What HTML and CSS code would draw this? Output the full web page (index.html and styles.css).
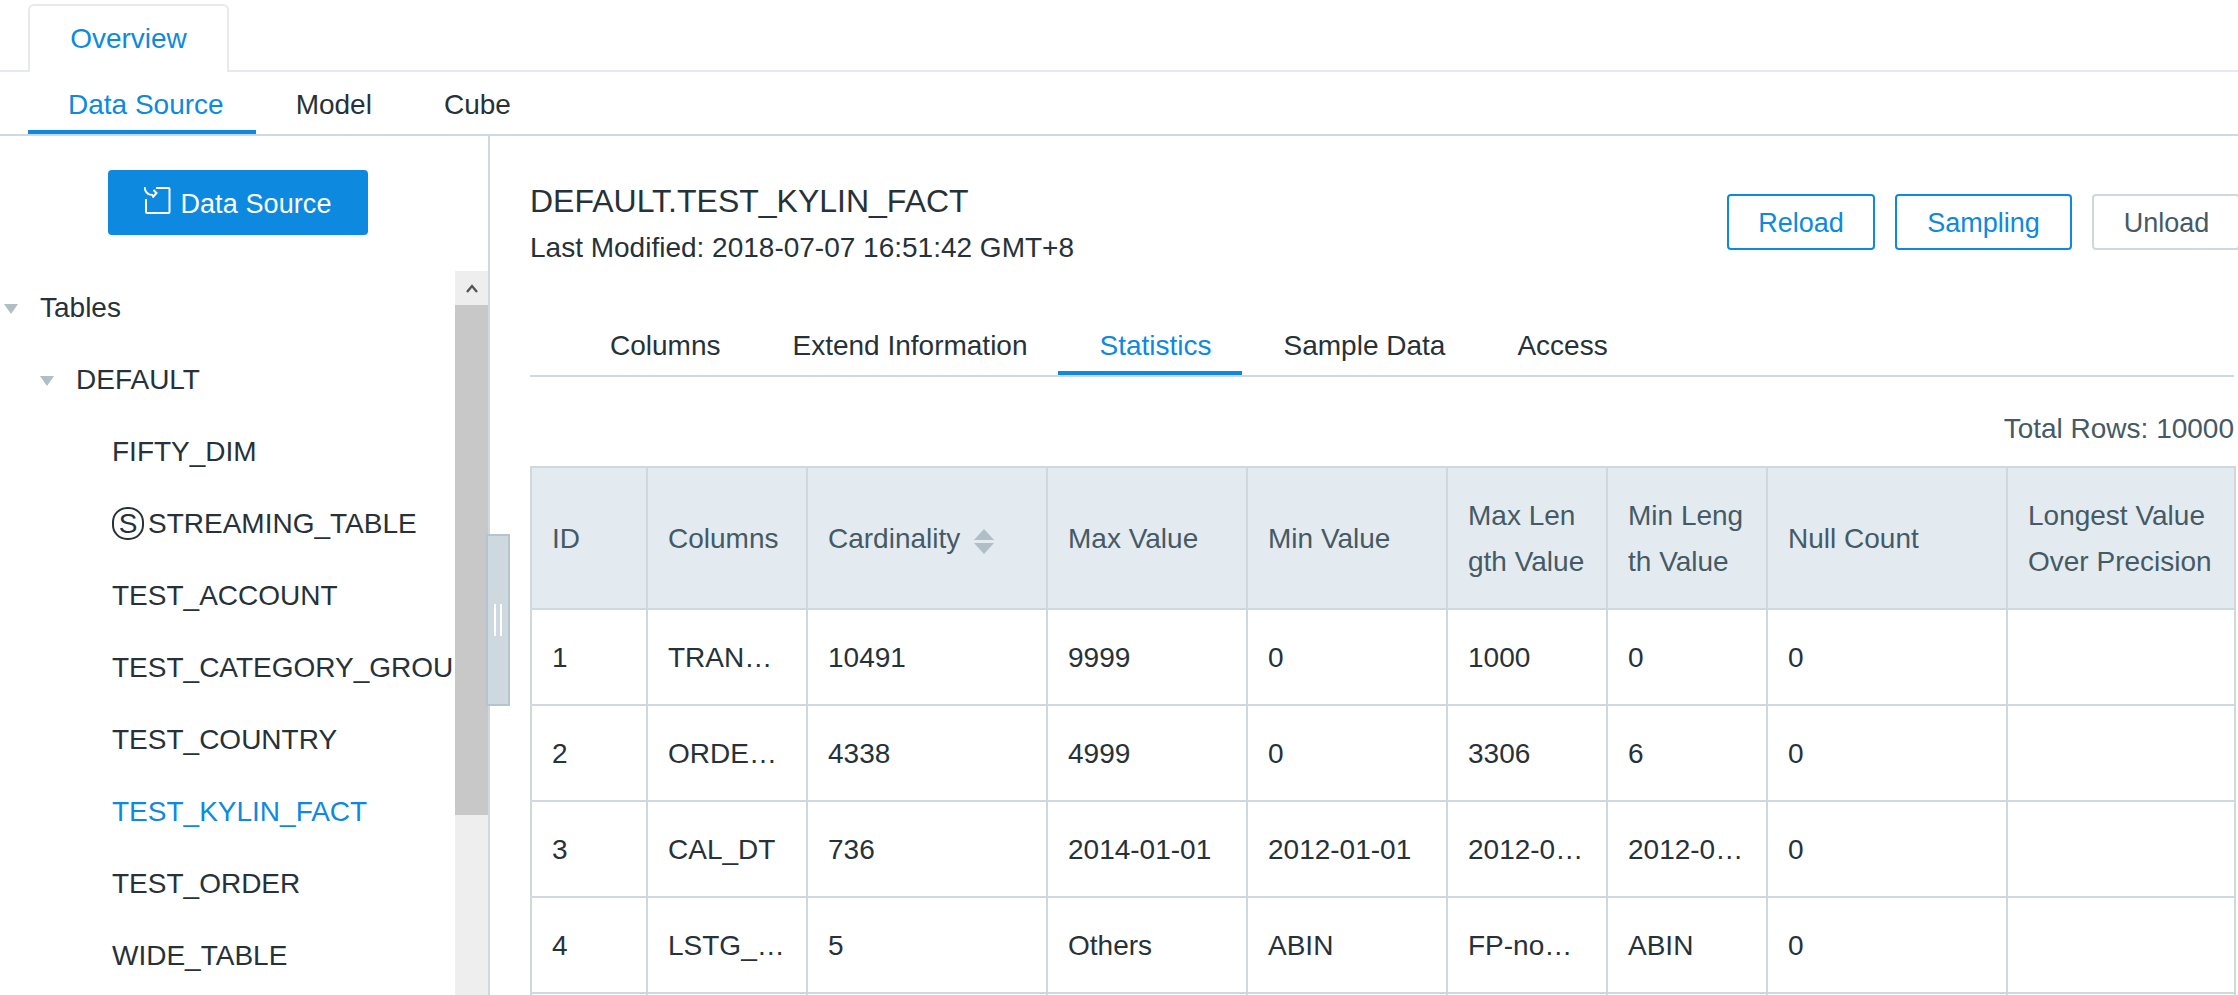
FILE: index.html
```html
<!DOCTYPE html>
<html lang="en">
<head>
    <meta charset="UTF-8">
    <title>Overview</title>
    <link rel="stylesheet" href="styles.css">
</head>

<body>
<div class="top-tabs">
    <a class="top-tab">Overview</a>
</div>
<div class="sub-tabs">
    <a class="tab selected">Data Source</a>
    <a class="tab">Model</a>
    <a class="tab">Cube</a>
</div>
<div class="workspace">
    <div class="sidebar">
        <a class="add-btn">
            <svg class="add-icon" width="27" height="29" viewBox="0 0 27 29" fill="none" stroke="#fff" stroke-width="2">
                <path d="M12 2H24.5a1 1 0 0 1 1 1V26a1 1 0 0 1-1 1H3a1 1 0 0 1-1-1V13"/>
                <path d="M0.5 1C1 6 4 9 9 9"/>
                <path d="M9.5 4L12.5 7L8.5 11.5"/>
            </svg>
            Data Source
        </a>
        <div class="tree-box">
            <ul class="tree">
                <li class="level-0"><i class="caret"></i>Tables</li>
                <li class="level-1"><i class="caret"></i>DEFAULT</li>
                <li class="level-2">FIFTY_DIM</li>
                <li class="level-2"><span class="stream">S</span>STREAMING_TABLE</li>
                <li class="level-2">TEST_ACCOUNT</li>
                <li class="level-2">TEST_CATEGORY_GROUPINGS</li>
                <li class="level-2">TEST_COUNTRY</li>
                <li class="level-2 selected">TEST_KYLIN_FACT</li>
                <li class="level-2">TEST_ORDER</li>
                <li class="level-2">WIDE_TABLE</li>
            </ul>
            <div class="scrollbar">
                <div class="scroll-up">
                    <svg width="12" height="9" viewBox="0 0 12 9" fill="none" stroke="#555" stroke-width="2.4"><path d="M1 8L6 2L11 8"/></svg>
                </div>
                <div class="scroll-thumb"></div>
            </div>
        </div>
        <div class="splitter"><i></i><i></i></div>
    </div>
    <div class="main">
        <div class="head">
            <div class="head-info">
                <h1>DEFAULT.TEST_KYLIN_FACT</h1>
                <p>Last Modified: 2018-07-07 16:51:42 GMT+8</p>
            </div>
            <div class="head-btns">
                <a class="btn reload">Reload</a>
                <a class="btn sampling">Sampling</a>
                <a class="btn plain">Unload</a>
            </div>
        </div>
        <div class="inner-tabs">
            <a class="tab">Columns</a>
            <a class="tab">Extend Information</a>
            <a class="tab selected">Statistics</a>
            <a class="tab">Sample Data</a>
            <a class="tab">Access</a>
        </div>
        <div class="total">Total Rows: 10000</div>
        <table class="stats">
            <colgroup>
                <col class="c-id"><col class="c-name"><col class="c-card"><col class="c-val"><col class="c-val">
                <col class="c-len"><col class="c-len"><col class="c-card"><col class="c-long">
            </colgroup>
            <thead>
            <tr>
                <th>ID</th>
                <th>Columns</th>
                <th>Cardinality
                    <svg class="sort" width="20" height="25" viewBox="0 0 20 25" fill="#b0bec5"><path d="M10 0L20 11H0Z"/><path d="M0 14H20L10 25Z"/></svg>
                </th>
                <th>Max Value</th>
                <th>Min Value</th>
                <th>Max Length Value</th>
                <th>Min Length Value</th>
                <th>Null Count</th>
                <th>Longest Value Over Precision</th>
            </tr>
            </thead>
            <tbody>
            <tr><td>1</td><td>TRANS_ID</td><td>10491</td><td>9999</td><td>0</td><td>1000</td><td>0</td><td>0</td><td></td></tr>
            <tr><td>2</td><td>ORDER_ID</td><td>4338</td><td>4999</td><td>0</td><td>3306</td><td>6</td><td>0</td><td></td></tr>
            <tr><td>3</td><td>CAL_DT</td><td>736</td><td>2014-01-01</td><td>2012-01-01</td><td>2012-01-01</td><td>2012-01-01</td><td>0</td><td></td></tr>
            <tr><td>4</td><td>LSTG_FORMAT_NAME</td><td>5</td><td>Others</td><td>ABIN</td><td>FP-non Auction</td><td>ABIN</td><td>0</td><td></td></tr>
            <tr><td></td><td></td><td></td><td></td><td></td><td></td><td></td><td></td><td></td></tr>
            </tbody>
        </table>
    </div>
</div>
</body>
</html>
```
FILE: styles.css
```css
*{
    margin:0;
    padding:0;
    box-sizing:border-box;
}
ul{
    list-style:none;
}
html,body{
    height:995px;
    overflow:hidden;
}
body{
    font-family:"Liberation Sans",Arial,sans-serif;
    font-size:28px;
    color:#263238;
    background:#fff;
}

/* top tab */
.top-tabs{
    height:72px;
    padding:4px 0 0 28px;
    border-bottom:2px solid #e6e9ee;
}
.top-tab{
    display:block;
    width:201px;
    height:68px;
    line-height:66px;
    text-align:center;
    color:#0d89e0;
    background:#fff;
    border:2px solid #e6e9ee;
    border-bottom:none;
    border-radius:6px 6px 0 0;
}

/* underlined tabs */
.sub-tabs,.inner-tabs{
    display:flex;
    border-bottom:2px solid #cfd8dc;
}
.sub-tabs{
    height:64px;
    padding-left:28px;
}
.sub-tabs .tab{
    padding:0 32px 0 40px;
    line-height:66px;
}
.tab{
    display:block;
    padding:0 30px 0 42px;
    height:100%;
    margin-bottom:-2px;
    border-bottom:4px solid transparent;
}
.tab.selected{
    color:#0d89e0;
    border-bottom-color:#0d89e0;
}

.workspace{
    display:flex;
    height:859px;
    overflow:hidden;
}

/* left side */
.sidebar{
    position:relative;
    flex:none;
    width:490px;
    border-right:2px solid #cfd8dc;
    padding-top:34px;
}
.add-btn{
    display:flex;
    align-items:center;
    justify-content:center;
    width:260px;
    height:65px;
    padding-top:4px;
    margin-left:108px;
    color:#fff;
    font-size:27px;
    letter-spacing:.1px;
    background:#0d89e0;
    border-radius:4px;
}
.add-icon{
    margin-right:9px;
    margin-top:-8px;
}
.tree-box{
    display:flex;
    margin-top:36px;
    height:724px;
}
.tree{
    width:452px;
    margin-right:3px;
    overflow:hidden;
}
.tree li{
    position:relative;
    display:flex;
    align-items:center;
    height:72px;
    padding-top:2px;
    white-space:nowrap;
}
.level-0{
    padding-left:40px;
}
.level-1{
    padding-left:76px;
}
.level-2{
    padding-left:112px;
}
.tree li.selected{
    color:#0d89e0;
}
.caret{
    position:absolute;
    top:33px;
    margin-left:-36px;
    width:0;
    height:0;
    border-style:solid;
    border-width:10px 7px 0;
    border-color:#b0bec5 transparent transparent;
}
.stream{
    flex:none;
    width:32px;
    height:33px;
    margin:-2px 4px 0 0;
    line-height:30px;
    text-align:center;
    font-size:28px;
    border:2px solid #263238;
    border-radius:15px;
}
.scrollbar{
    width:33px;
    background:#eee;
}
.scroll-up{
    display:flex;
    align-items:center;
    justify-content:center;
    height:34px;
}
.scroll-thumb{
    height:510px;
    background:#c8c8c8;
}
.splitter{
    position:absolute;
    left:486px;
    top:398px;
    display:flex;
    justify-content:center;
    gap:4px;
    width:24px;
    height:172px;
    padding-top:68px;
    background:#cdd8df;
    border:2px solid #b4c5d0;
}
.splitter i{
    width:2px;
    height:32px;
    background:#fff;
}

/* right side */
.main{
    flex:none;
    width:1744px;
    padding-left:40px;
}
.head{
    display:flex;
    justify-content:space-between;
    padding-top:45px;
}
.head h1{
    font-size:32px;
    font-weight:normal;
    line-height:40px;
}
.head p{
    margin-top:7px;
    line-height:40px;
}
.head-btns{
    display:flex;
    gap:20px;
    margin:13px -6px 0 0;
}
.btn{
    display:block;
    height:56px;
    line-height:54px;
    font-size:27px;
    text-align:center;
    color:#0d89e0;
    border:2px solid #0d89e0;
    border-radius:4px;
}
.reload{
    width:148px;
}
.sampling{
    width:177px;
}
.plain{
    width:148px;
    padding-left:1px;
    color:#455a64;
    border-color:#cfd8dc;
}
.inner-tabs{
    height:60px;
    margin-top:49px;
    padding-left:38px;
}
.inner-tabs .tab{
    line-height:58px;
}
.total{
    margin-top:32px;
    height:40px;
    line-height:40px;
    text-align:right;
    color:#455a64;
}
.stats{
    width:1704px;
    margin-top:17px;
    table-layout:fixed;
    border-collapse:collapse;
    line-height:46px;
}
.c-id{
    width:116px;
}
.c-name,.c-len{
    width:160px;
}
.c-card{
    width:240px;
}
.c-val{
    width:200px;
}
.c-long{
    width:228px;
}
.stats th,.stats td{
    padding:0 20px;
    border:2px solid #cfd8dc;
    text-align:left;
    font-weight:normal;
}
.stats th{
    height:142px;
    padding-top:2px;
    color:#455a64;
    background:#e3ebf1;
    word-break:break-all;
}
.stats td{
    height:96px;
    padding-top:2px;
    white-space:nowrap;
    overflow:hidden;
    text-overflow:ellipsis;
}
.sort{
    vertical-align:-6px;
    margin-left:6px;
}
```
